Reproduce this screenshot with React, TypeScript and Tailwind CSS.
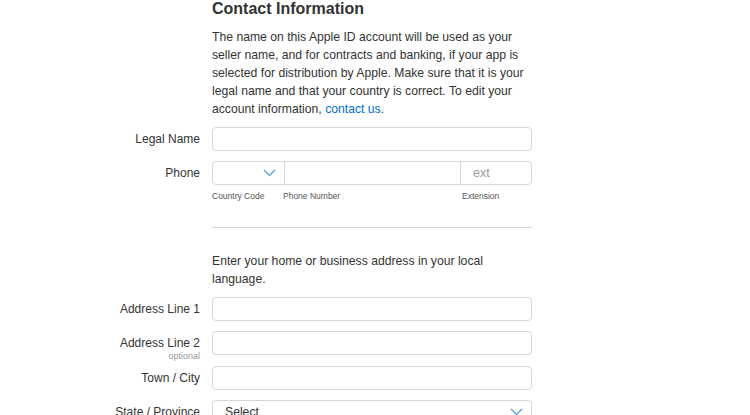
import React from 'react';

const Chevron = () => (
  <svg width="13" height="8" viewBox="0 0 13 8" fill="none">
    <path d="M1 1l5.5 5.5L12 1" stroke="#4a97dc" strokeWidth="1.1" />
  </svg>
);

const Label = ({ children, hint }: { children: React.ReactNode; hint?: string }) => (
  <div className="relative flex h-6 items-center justify-end text-[12px] text-[#333]">
    {children}
    {hint && (
      <span className="absolute right-0 top-[21px] text-[9px] leading-none text-[#999]">{hint}</span>
    )}
  </div>
);

const Field = () => <div className="h-6 rounded-[4px] border border-[#d6d6d6] bg-white" />;

export default function App() {
  return (
    <div className="h-[415px] w-[750px] overflow-hidden bg-white font-['Liberation_Sans',sans-serif] text-[#333]">
      <div className="ml-[212px] w-[320px] -mt-[2px]">
        <h2 className="text-[16px] font-semibold leading-[22px] text-[#333]">Contact Information</h2>
        <p className="mt-[8px] text-[12.2px] leading-[18px] text-[#333]">
          The name on this Apple ID account will be used as your seller name, and for contracts and banking, if your app is selected for distribution by Apple. Make sure that it is your legal name and that your country is correct. To edit your account information, <span className="text-[#0070c9]">contact us</span>.
        </p>
      </div>

      <div className="mt-[9px] grid grid-cols-[200px_320px] gap-x-3 gap-y-[10px]">
        <Label>Legal Name</Label>
        <Field />

        <Label>Phone</Label>
        <div>
          <div className="flex h-6 rounded-[4px] border border-[#d6d6d6]">
            <div className="flex w-[71px] items-center justify-end pr-[8px]">
              <Chevron />
            </div>
            <div className="flex-1 border-l border-[#d6d6d6]" />
            <div className="flex w-[71px] items-center border-l border-[#d6d6d6] pl-[12px] text-[12.5px] text-[#999]">ext</div>
          </div>
          <div className="mt-[5px] flex text-[8.5px] text-[#555]">
            <span className="w-[71px]">Country Code</span>
            <span className="flex-1">Phone Number</span>
            <span className="w-[71px] pl-[1px]">Extension</span>
          </div>
        </div>
      </div>

      <div className="ml-[212px] mt-[24px] w-[320px] border-t border-[#d6d6d6]" />

      <p className="ml-[212px] mt-[24px] w-[320px] text-[12.2px] leading-[18px] text-[#333]">
        Enter your home or business address in your local language.
      </p>

      <div className="mt-[9px] grid grid-cols-[200px_320px] gap-x-3 gap-y-[10px]">
        <Label>Address Line 1</Label>
        <Field />

        <Label hint="optional">Address Line 2</Label>
        <Field />

        <div className="col-span-2 mt-px grid grid-cols-[200px_320px] gap-x-3">
          <Label>Town / City</Label>
          <Field />
        </div>

        <Label>State / Province</Label>
        <div className="flex h-6 items-center justify-between rounded-[4px] border border-[#d6d6d6] pl-[12px] pr-[8px] text-[12.2px] text-[#333]">
          <span>Select</span>
          <Chevron />
        </div>
      </div>
    </div>
  );
}
